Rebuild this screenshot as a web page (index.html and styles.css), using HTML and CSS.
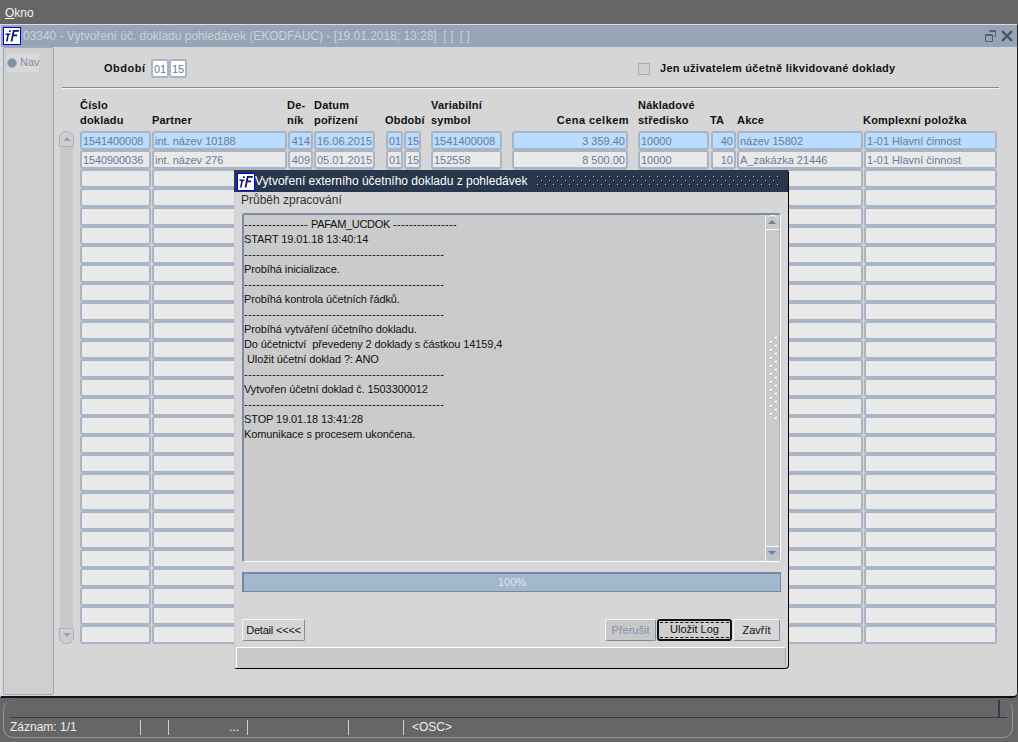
FILE: index.html
```html
<!DOCTYPE html>
<html lang="cs">
<head>
<meta charset="utf-8">
<title>Vytvoření úč. dokladu pohledávek</title>
<link rel="stylesheet" href="styles.css">
</head>
<body>
<svg class="defs" width="0" height="0">
  <defs>
    <symbol id="logo" viewBox="0 0 18 18">
      <rect x="0.5" y="0.5" width="17" height="17" fill="#fff" stroke="#0000f0"/>
      <path d="M2.5 6.5h5.2L7 8H5.9L4.6 14.5H3L4.3 8H2.5zM6.2 3.2h1.7L7.6 5H5.9z" fill="#12126e"/>
      <path d="M10 3h6l-.4 1.8h-4.2l-.5 2.7h3.4l-.4 1.7h-3.4l-1.1 5.3H7.6z" fill="#12126e"/>
    </symbol>
    <pattern id="dots" width="8" height="8" patternUnits="userSpaceOnUse">
      <rect x="1" y="1" width="1" height="1" fill="#c4ccd8"/>
      <rect x="2" y="2" width="1" height="1" fill="#050a14"/>
      <rect x="5" y="5" width="1" height="1" fill="#c4ccd8"/>
      <rect x="6" y="6" width="1" height="1" fill="#050a14"/>
    </pattern>
    <pattern id="thumbdots" width="13" height="8" patternUnits="userSpaceOnUse">
      <rect x="4" y="4" width="2" height="2" fill="#fff"/>
      <rect x="6" y="5" width="1" height="1" fill="#9aa4bb"/>
      <rect x="4" y="6" width="1" height="1" fill="#9aa4bb"/>
      <rect x="9" y="0" width="2" height="2" fill="#fff"/>
      <rect x="11" y="1" width="1" height="1" fill="#9aa4bb"/>
      <rect x="9" y="2" width="1" height="1" fill="#9aa4bb"/>
    </pattern>
  </defs>
</svg>

<div class="menubar"><span class="menu-item"><u>O</u>kno</span></div>

<main class="window">
  <header class="win-title">
    <svg class="logo" width="18" height="18"><use href="#logo"/></svg>
    <span class="win-title-text">03340 - Vytvoření úč. dokladu pohledávek (EKODFAUC) - [19.01.2018; 13:28]&nbsp; [ ]&nbsp; [ ]</span>
    <svg class="win-ctl" width="32" height="14" viewBox="0 0 32 14">
      <path d="M5.5 1.5h6v6h-2M1.5 5.5h7v7h-7zM1.5 6.5h7M5.5 2.5h6" fill="none" stroke="#54606f"/>
      <path d="M18 2l10 10M28 2L18 12" stroke="#4a5563" stroke-width="2.4" fill="none"/>
    </svg>
  </header>
  <div class="win-body">
    <aside class="nav"><div class="nav-item"><span class="radio"></span><span>Nav</span></div></aside>
    <section class="form">
      <div class="filter">
        <span class="filter-label">Období</span>
        <span class="fld small white">01</span><span class="fld small white">15</span>
        <span class="check"></span>
        <span class="check-label">Jen uživatelem účetně likvidované doklady</span>
      </div>
      <hr class="sep">
      <div class="table">
        <div class="scroll-col">
          <span class="scroll-btn up"></span>
          <span class="scroll-track"></span>
          <span class="scroll-btn down"></span>
        </div>
        <div class="grid" id="grid">
          <div class="th c1 two">Číslo<br>dokladu</div>
          <div class="th c2">Partner</div>
          <div class="th c3 two">De-<br>ník</div>
          <div class="th c4 two">Datum<br>pořízení</div>
          <div class="th c5">Období</div>
          <div class="th c6 two">Variabilní<br>symbol</div>
          <div class="th c7 right">Cena celkem</div>
          <div class="th c8 two">Nákladové<br>středisko</div>
          <div class="th c9">TA</div>
          <div class="th c10">Akce</div>
          <div class="th c11">Komplexní položka</div>
        </div>
      </div>
    </section>
  </div>
</main>

<footer class="statusbar">
  <div class="status-inner">
    <div class="status-top"><span class="status-tick"></span></div>
    <div class="status-row">
      <span class="s1">Záznam: 1/1</span>
      <span class="s2"></span>
      <span class="s3">...</span>
      <span class="s4"></span>
      <span class="s5"></span>
      <span class="s6">&lt;OSC&gt;</span>
    </div>
  </div>
</footer>

<div class="dialog">
  <div class="dlg-title">
    <svg class="logo" width="18" height="18"><use href="#logo"/></svg>
    <span class="dlg-title-text">Vytvoření externího účetního dokladu z pohledávek</span>
    <svg class="dlg-dots" width="244" height="12"><rect width="244" height="12" fill="url(#dots)"/></svg>
  </div>
  <div class="dlg-body">
    <div class="dlg-sub">Průběh zpracování</div>
    <div class="log">
      <pre class="log-text"><span class="dash">----------------</span> <span class="pafam">PAFAM_UCDOK</span> <span class="dash">----------------</span>
START 19.01.18 13:40:14
<span class="dash">--------------------------------------------------</span>
Probíhá inicializace.
<span class="dash">--------------------------------------------------</span>
Probíhá kontrola účetních řádků.
<span class="dash">--------------------------------------------------</span>
Probíhá vytváření účetního dokladu.
Do účetnictví  převedeny 2 doklady s částkou 14159,4
 Uložit účetní doklad ?: ANO
<span class="dash">--------------------------------------------------</span>
Vytvořen účetní doklad č. 1503300012
<span class="dash">--------------------------------------------------</span>
STOP 19.01.18 13:41:28
Komunikace s procesem ukončena.</pre>
      <div class="log-scroll">
        <span class="ls-btn up"></span>
        <div class="ls-track">
          <svg class="ls-dots" width="13" height="82"><rect width="13" height="82" fill="url(#thumbdots)"/></svg>
        </div>
        <span class="ls-btn down"></span>
      </div>
    </div>
    <div class="progress">100%</div>
    <div class="buttons">
      <button class="btn w-detail">Detail &lt;&lt;&lt;&lt;</button>
      <span class="spacer"></span>
      <button class="btn disabled w-stop">Přerušit</button>
      <button class="btn focus w-save"><span>Uložit Log</span></button>
      <button class="btn w-close">Zavřít</button>
    </div>
    <div class="dlg-status"></div>
  </div>
</div>

<script src="app.js"></script>
</body>
</html>
```
FILE: app.js
```js
var data = [
  ["c1|sel","1541400008"],["c2|sel","int. název 10188"],["c3|sel r","414"],["c4|sel","16.06.2015"],["c5a|sel","01"],["c5b|sel","15"],["c6|sel","1541400008"],["c7|sel r","3 359.40"],["c8|sel","10000"],["c9|sel r","40"],["c10|sel","název 15802"],["c11|sel","1-01 Hlavní činnost"],
  ["c1|","1540900036"],["c2|","int. název 276"],["c3|r","409"],["c4|","05.01.2015"],["c5a|","01"],["c5b|","15"],["c6|","152558"],["c7|r","8 500.00"],["c8|","10000"],["c9|r","10"],["c10|","A_zakázka 21446"],["c11|","1-01 Hlavní činnost"]
];
var cols = ["c1","c2","c3","c4","c5a","c5b","c6","c7","c8","c9","c10","c11"];
for (var i = 0; i < 25; i++) cols.forEach(function (c) { data.push([c + "|", ""]); });
var grid = document.getElementById("grid");
data.forEach(function (d) {
  var p = d[0].split("|"), el = document.createElement("div");
  el.className = "fld " + p[0] + " " + p[1];
  el.textContent = d[1];
  grid.appendChild(el);
});
```
FILE: styles.css
```css
* { box-sizing: border-box; }
html, body { margin: 0; height: 742px; overflow: hidden; }
body { position: relative; background: #666; font: 11px/15px "Liberation Sans", Arial, sans-serif; color: #000; display: flex; flex-direction: column; }
.defs { position: absolute; }

.menubar { height: 24px; flex: none; background: #666; color: #f2f2f2; font-size: 12px; line-height: 26px; padding-left: 5px; }

.window { height: 674px; flex: none; background: #d6d6d6; border: 1px solid #d8dde4; border-bottom: 2px solid #10141c; border-right: 1px solid #222; border-radius: 0 2px 5px 0; display: flex; flex-direction: column; }
.win-title { height: 22px; flex: none; background: #96a4b6; display: flex; align-items: center; padding: 0 1px 0 2px; color: #ccd2da; font-size: 12px; }
.win-title-text { margin-left: 2px; flex: 1; white-space: nowrap; letter-spacing: -.02px; }
.win-ctl { flex: none; }
.win-body { flex: 1; display: flex; padding-left: 2px; min-height: 0; }

.nav { width: 51px; flex: none; margin-bottom: 1px; background: #cfcfcf; border: 1px solid #9dabbb; border-radius: 2px; padding: 5px 3px; }
.nav-item { background: #d9d9d9; display: flex; align-items: center; height: 19px; gap: 3px; color: #8090a8; font-size: 11px; width: 32px; }
.radio { width: 10px; height: 10px; border-radius: 50%; background: #7f8fa5; border: 1px solid #a3afc0; flex: none; }

.form { flex: 1; padding-left: 5px; min-width: 0; }
.filter { height: 27px; margin-top: 8px; display: flex; align-items: center; }
.filter-label { font-weight: bold; letter-spacing: .5px; margin-left: 45px; width: 47px; color: #111; }
.check { width: 12px; height: 12px; background: #cfcfcf; border: 1px solid #a3afc0; margin-left: 451px; }
.check-label { font-weight: bold; letter-spacing: .27px; margin-left: 10px; color: #111; }
.sep { height: 2px; margin: 5px 18px 0 3px; border: 0; border-top: 1px solid #888; border-bottom: 1px solid #f4f4f4; }

.table { display: flex; margin-top: 8px; }
.scroll-col { width: 21px; flex: none; margin-top: 34px; display: flex; flex-direction: column; }
.scroll-btn { height: 16px; width: 15px; border: 1px solid #a3afc0; background: #cfcfcf; position: relative; flex: none; }
.scroll-btn.up { border-radius: 8px 8px 0 0; }
.scroll-btn.down { border-radius: 0 0 8px 8px; }
.scroll-btn::after { content: ""; position: absolute; left: 3px; border-left: 4px solid transparent; border-right: 4px solid transparent; }
.scroll-btn.up::after { top: 5px; border-bottom: 4px solid #98a5b7; }
.scroll-btn.down::after { top: 4px; border-top: 4px solid #98a5b7; }
.scroll-track { height: 481px; width: 13px; margin-left: 1px; background: #c8c8c8; flex: none; }

.grid { display: grid; grid-template-columns: 72px 136px 26px 62px 10px 18px 18px 9px 72px 9px 117px 9px 72px 1px 26px 127px 134px; grid-template-rows: 34px; grid-auto-rows: 19px; align-content: start; }
.th { grid-row: 1; padding-top: 16px; font-weight: bold; letter-spacing: .2px; color: #111; white-space: nowrap; line-height: 15px; }
.th.two { padding-top: 1px; }
.th.right { text-align: right; letter-spacing: .45px; }
.th.c1 { grid-column: 1; }
.th.c2 { grid-column: 2; }
.th.c3 { grid-column: 3; margin-left: -1px; }
.th.c4 { grid-column: 4; }
.th.c5 { grid-column: 5 / span 4; padding-left: 9px; }
.th.c6 { grid-column: 9; }
.th.c7 { grid-column: 11; }
.th.c8 { grid-column: 13; }
.th.c9 { grid-column: 14 / span 2; }
.th.c10 { grid-column: 16; }
.th.c11 { grid-column: 16 / span 2; padding-left: 126px; }

.fld { height: 19px; border: 2px solid #a9b5c5; border-radius: 3px; background: #e9e9e9; color: #6c7b98; font-size: 11px; line-height: 15px; padding: 1px 1px 0; white-space: nowrap; overflow: hidden; margin-right: 1px; }
.fld.sel { background: #b9dcff; }
.fld.r { text-align: right; }
.c1 { grid-column: 1; letter-spacing: -.1px; } .c2 { grid-column: 2; } .c3 { grid-column: 3; } .c4 { grid-column: 4; }
.c5a { grid-column: 6; } .c5b { grid-column: 7; } .c6 { grid-column: 9; } .c7 { grid-column: 11; }
.c8 { grid-column: 13; } .c9 { grid-column: 15; } .c10 { grid-column: 16; } .c11 { grid-column: 17; }
.th.c1 { letter-spacing: .2px; }
.fld.small { width: 18px; text-align: center; padding: 1px 0 0; margin: 0; }
.fld.white { background: #fff; }

.statusbar { flex: 1; background: #666; padding: 1px 4px 3px 3px; }
.status-inner { height: 38px; margin-top: 1px; border: 1px solid #8a97a8; border-top: 0; border-radius: 10px; color: #eee; font-size: 12px; display: flex; flex-direction: column; margin-right: 1px; }
.status-top { height: 18px; border-bottom: 1px solid #333c4a; margin-left: 6px; margin-right: 5px; display: flex; justify-content: flex-end; padding-right: 7px; }
.status-tick { width: 2px; background: #333c4a; }
.status-row { display: flex; height: 19px; padding-left: 6px; }
.status-row span { height: 15px; margin-top: 2px; line-height: 15px; border-right: 1px solid #c8d0dc; }
.s1 { width: 131px; } .s2 { width: 28px; } .s3 { width: 79px; text-align: right; padding-right: 8px; } .s4 { width: 101px; } .s5 { width: 55px; }
.status-row .s6 { border: 0; padding-left: 8px; }

.dialog { position: absolute; left: 234px; top: 170px; width: 555px; height: 499px; background: #d6d6d6; border-right: 1px solid #000; border-bottom: 1px solid #000; border-radius: 2px 3px 4px 3px; display: flex; flex-direction: column; }
.dlg-title { height: 22px; flex: none; background: #28374c; display: flex; align-items: center; padding-left: 3px; color: #fff; font-size: 12px; }
.dlg-title .logo { margin-top: 1px; }
.dlg-title-text { white-space: nowrap; flex: 1; }
.dlg-dots { flex: none; margin-right: 8px; }
.dlg-body { flex: 1; border-left: 1px solid #c8ccd2; display: flex; flex-direction: column; min-height: 0; }
.dlg-sub { height: 21px; line-height: 17px; font-size: 12px; color: #333; padding-left: 6px; flex: none; }
.log { height: 349px; margin: 0 7px; flex: none; background: #cbcbcb; border: 1px solid #fff; border-top: 2px solid #7c8ca4; border-left: 2px solid #7c8ca4; border-radius: 3px; display: flex; }
.log-text { flex: 1; margin: 0; padding: 2px 0 0 0; font: 11px/15px "Liberation Sans", Arial, sans-serif; letter-spacing: -.1px; color: #111; overflow: hidden; }
.dash { letter-spacing: .34px; }
.pafam { letter-spacing: -.3px; }
.log-scroll { width: 15px; flex: none; border-left: 1px solid #eef0f4; border-right: 1px solid #a3afc0; background: #cbcbcb; display: flex; flex-direction: column; }
.ls-btn { height: 15px; flex: none; position: relative; background: #c8c8c8; }
.ls-btn.up { border-bottom: 1px solid #fff; border-top: 1px solid #fff; border-radius: 7px 7px 0 0; }
.ls-btn.down { border-top: 1px solid #fff; background: #b9c1cd; border-radius: 0 0 7px 7px; }
.ls-btn::after { content: ""; position: absolute; left: 2px; border-left: 4px solid transparent; border-right: 4px solid transparent; }
.ls-btn.up::after { top: 4px; border-bottom: 4px solid #6e7f9b; }
.ls-btn.down::after { top: 4px; border-top: 4px solid #6e7f9b; }
.ls-track { flex: 1; position: relative; }
.ls-dots { position: absolute; left: 0; top: 107px; }

.progress { height: 20px; flex: none; margin: 10px 7px 0; background: #a3b7cd; border: 2px solid #7388a8; border-bottom-width: 1px; border-right-width: 1px; color: #dfe6ee; font-size: 11px; line-height: 17px; text-align: center; }
.buttons { display: flex; margin: 27px 8px 0 7px; height: 22px; flex: none; gap: 1px; }
.spacer { flex: 1; }
.btn { font: 11px "Liberation Sans", Arial, sans-serif; color: #111; background: #d6d6d6; border: 1px solid #f6f6f6; border-right-color: #7c8ca4; border-bottom-color: #7c8ca4; border-radius: 2px; padding: 0; height: 22px; }
.w-detail { width: 63px; letter-spacing: -.2px; }
.btn.disabled { background: #c8c8c8; color: #8191a9; }
.w-stop { width: 51px; }
.w-save { width: 75px; }
.w-close { width: 47px; }
.btn.focus { border: 2px solid #0c1018; border-radius: 3px; background: #cfcfcf; padding: 1px; }
.btn.focus span { display: block; height: 100%; line-height: 13px; border-top: 1px dashed #111; border-bottom: 1px dashed #111; }
.dlg-status { flex: 1; margin: 6px 2px 0 1px; background: #c8c8c8; border: 1px solid #fff; border-right-color: #a3afc0; border-bottom: 0; border-radius: 2px 2px 0 0; }
```
